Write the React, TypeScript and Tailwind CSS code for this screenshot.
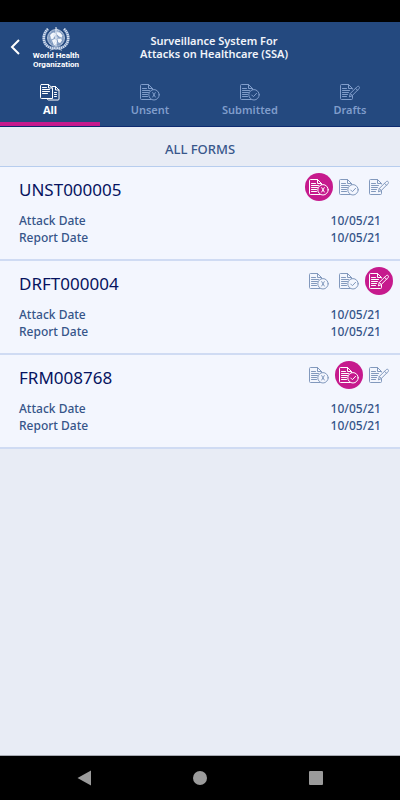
import type { ReactNode } from "react";

type Status = "unsent" | "submitted" | "draft";

interface Form {
  id: string;
  status: Status;
  attackDate: string;
  reportDate: string;
}

const forms: Form[] = [
  { id: "UNST000005", status: "unsent", attackDate: "10/05/21", reportDate: "10/05/21" },
  { id: "DRFT000004", status: "draft", attackDate: "10/05/21", reportDate: "10/05/21" },
  { id: "FRM008768", status: "submitted", attackDate: "10/05/21", reportDate: "10/05/21" },
];

function Icon({ children, className }: { children: ReactNode; className: string }) {
  return (
    <svg
      viewBox="0 0 20 17"
      className={className}
      fill="none"
      stroke="currentColor"
      strokeWidth="1"
      strokeLinecap="round"
      strokeLinejoin="round"
      aria-hidden="true"
    >
      {children}
    </svg>
  );
}

function BadgeDocument({ children }: { children: ReactNode }) {
  return (
    <>
      <path d="M11 15.500H1.500a1 1 0 0 1-1-1v-13a1 1 0 0 1 1-1H8.500l4 4V5.500" />
      <path d="M8.500 .5v4h4" />
      <path d="M2.500 4.500h4M2.500 6.500h7M2.500 8.500h6M2.500 10.500h5M2.500 12.500h5" />
      <circle cx="14" cy="10.800" r="5.200" />
      {children}
    </>
  );
}

function UnsentIcon({ className }: { className: string }) {
  return (
    <Icon className={className}>
      <BadgeDocument>
        <path d="M12.700 8.600l2.600 4.400M15.300 8.600l-2.600 4.400" />
      </BadgeDocument>
    </Icon>
  );
}

function SubmittedIcon({ className }: { className: string }) {
  return (
    <Icon className={className}>
      <BadgeDocument>
        <path d="M11.700 11l1.700 1.700 3.200-3.400" />
      </BadgeDocument>
    </Icon>
  );
}

function DraftIcon({ className }: { className: string }) {
  return (
    <Icon className={className}>
      <path d="M12.500 12v2.500a1 1 0 0 1-1 1h-10a1 1 0 0 1-1-1v-13a1 1 0 0 1 1-1h7l4 4V5" />
      <path d="M8.500 .5v4h3.500" />
      <path d="M2.500 4.500h4M2.500 6.500h7M2.500 8.500h6M2.500 10.500h5M2.500 12.500h4" />
      <path d="M9.500 12.500l.8-3 6.500-6.500c.8-.8 1.600-1 2.300-.4s.5 1.500-.3 2.300l-6.500 6.600zM15.500 4.300l2 2M10.300 9.500l2 2" />
    </Icon>
  );
}

function AllIcon({ className }: { className: string }) {
  return (
    <Icon className={className}>
      <path d="M1.500 .5h7l4 3.500v10.500H1.500a1 1 0 0 1-1-1v-12a1 1 0 0 1 1-1zM8.500 .5v3.500h4" />
      <path d="M2.500 3.500h4M2.500 5.500h7M2.500 7.500h7M2.500 9.500h5" />
      <path d="M12 2.500h3.500l3.500 3.500v9a1 1 0 0 1-1 1H8.500a1 1 0 0 1-1-1v-.5M15.500 2.500v3.500H19M14.500 8.500h2M14.500 10.500h2M14.500 12.500h2" />
    </Icon>
  );
}

function WhoEmblem() {
  return (
    <svg viewBox="0 0 28 25" className="h-[25px] w-7" fill="none" stroke="#d5e0ef" aria-hidden="true">
      <circle cx="14" cy="12" r="8.500" fill="#7f99bf" stroke="#c5d3e6" strokeWidth=".8" />
      <g strokeWidth=".5" opacity=".6">
        <circle cx="14" cy="12" r="5.500" />
        <path d="M5.500 12h17M8 6l12 12M20 6L8 18" />
      </g>
      <path
        d="M8 9l3-2.500 2 .5 1 2-2 1.500-.5 2-2 1zM15 6l3 .5 2.500 3-1 2-2.500-1-2-2zM10 14l3-1 2 2-1 3-2 1.500zM16 13l3-.5 1 2-2 2.500-2-1z"
        fill="#f4f8fd"
        stroke="none"
      />
      <path d="M14 1v23" stroke="#f4f8fd" strokeWidth="1" />
      <path d="M14 3c3 0 3 3 0 4s-3 3.500 0 4 2.500 3 0 4-2 3 0 4" strokeWidth=".8" />
      <path
        d="M6 3C.8 7.500 .3 15.500 5.300 20c2.500 2 5.200 2.500 8.700 1.700M22 3c5.200 4.500 5.700 12.500.7 17-2.500 2-5.200 2.500-8.700 1.700"
        stroke="#6785b2"
        strokeWidth="2.800"
      />
      <path
        d="M6 3C.8 7.500 .3 15.500 5.300 20c2.500 2 5.200 2.500 8.700 1.700M22 3c5.200 4.500 5.700 12.500.7 17-2.500 2-5.200 2.500-8.700 1.700"
        strokeWidth="2.600"
        strokeDasharray="1.200 .8"
      />
      <path d="M8 24.300l6-2.300 6 2.300" strokeWidth=".8" />
    </svg>
  );
}

const tabs = [
  { label: "All", Glyph: AllIcon },
  { label: "Unsent", Glyph: UnsentIcon },
  { label: "Submitted", Glyph: SubmittedIcon },
  { label: "Drafts", Glyph: DraftIcon },
];

const statusIcons = [
  { status: "unsent", Glyph: UnsentIcon },
  { status: "submitted", Glyph: SubmittedIcon },
  { status: "draft", Glyph: DraftIcon },
];

function FormCard({ form }: { form: Form }) {
  return (
    <li className="h-[94px] border-b-2 border-[#cfdbf3] bg-[#f3f6fe] pl-[19px]">
      <div className="flex h-9 items-start justify-between pt-1.5 pr-[7px]">
        <h2 className="pt-[5px] text-[17px] leading-6 font-normal text-[#06135f]">{form.id}</h2>
        <div className="flex gap-0.5">
          {statusIcons.map(({ status, Glyph }) => (
            <span
              key={status}
              className={
                status === form.status
                  ? "flex size-7 items-center justify-center rounded-full bg-[#c61a8d] text-white"
                  : "flex size-7 items-center justify-center text-[#8299bd]"
              }
            >
              <Glyph className="h-[17px] w-5" />
            </span>
          ))}
        </div>
      </div>
      <dl className="pt-[9px] pr-[19px] text-xs leading-[17px] font-medium text-[#365589]">
        <div className="flex justify-between">
          <dt>Attack Date</dt>
          <dd>{form.attackDate}</dd>
        </div>
        <div className="flex justify-between">
          <dt>Report Date</dt>
          <dd>{form.reportDate}</dd>
        </div>
      </dl>
    </li>
  );
}

export default function App() {
  return (
    <div className="flex min-h-screen flex-col bg-[#e8ecf5] font-['Noto_Sans','Open_Sans',sans-serif]">
      <div className="h-[22px] bg-black" />
      <header className="border-b border-[#0c2a70] bg-[#24497f]">
        <div className="grid h-[54px] grid-cols-[84px_1fr_56px] items-center pb-1">
          <div className="flex items-center">
            <button type="button" aria-label="Back" className="flex h-10 w-[29px] items-center justify-center text-white">
              <svg viewBox="0 0 10 16" className="h-4 w-[10px]" fill="none" stroke="currentColor" strokeWidth="2" aria-hidden="true">
                <path d="M9 1L2 8l7 7" />
              </svg>
            </button>
            <div className="flex w-[54px] flex-col items-center font-['Roboto','Open_Sans',sans-serif] text-[8px] leading-[9px] font-bold text-white">
              <WhoEmblem />
              <span className="text-center">
                World Health
                <br />
                Organization
              </span>
            </div>
          </div>
          <h1 className="text-center text-[11px] leading-[13px] font-semibold whitespace-nowrap text-[#f1f4fa]">
            Surveillance System For
            <br />
            Attacks on Healthcare (SSA)
          </h1>
        </div>
        <nav className="grid grid-cols-4">
          {tabs.map(({ label, Glyph }, index) => (
            <button
              key={label}
              type="button"
              className={
                index === 0
                  ? "flex h-[50px] flex-col items-center gap-px border-b-4 border-[#c61a8d] pt-2 text-[11px] leading-4 font-bold text-white"
                  : "flex h-[50px] flex-col items-center gap-px border-b-4 border-transparent pt-2 text-[11px] leading-4 font-semibold text-[#809dcb]"
              }
            >
              <Glyph className="h-[17px] w-5" />
              {label}
            </button>
          ))}
        </nav>
      </header>
      <main className="flex-1">
        <p className="border-b border-[#b7cdee] pt-3 pb-[7px] text-center text-[13px] leading-5 font-medium text-[#38578b]">
          ALL FORMS
        </p>
        <ul>
          {forms.map((form) => (
            <FormCard key={form.id} form={form} />
          ))}
        </ul>
      </main>
      <footer className="grid h-[45px] grid-cols-3 items-center border-t border-[#a7abb3] bg-black px-[26px] text-[#9b9b9b]">
        <button type="button" aria-label="Back" className="flex h-10 items-center justify-center">
          <svg viewBox="0 0 14 16" className="h-4 w-[14px]" fill="currentColor" aria-hidden="true">
            <path d="M14 .5v15L.5 8z" />
          </svg>
        </button>
        <button type="button" aria-label="Home" className="flex h-10 items-center justify-center">
          <span className="size-[14px] rounded-full bg-current" />
        </button>
        <button type="button" aria-label="Recent apps" className="flex h-10 items-center justify-center">
          <span className="size-[14px] rounded-[1px] bg-current" />
        </button>
      </footer>
    </div>
  );
}
